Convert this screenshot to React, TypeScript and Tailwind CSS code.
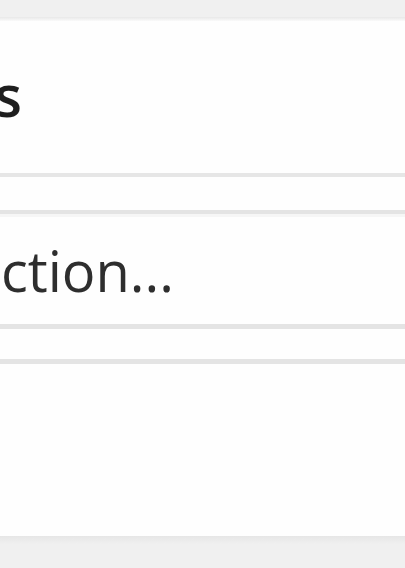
export default function App() {
  return (
    <div
      className="h-[568px] w-[405px] overflow-hidden bg-[#f0f0f0] flex flex-col"
      style={{ fontFamily: '"Open Sans", "Noto Sans", sans-serif' }}
    >
      {/* top gap */}
      <div className="h-[17px] shrink-0" />
      <div className="h-[4px] shrink-0 bg-gradient-to-b from-[#e8e8e8] to-[#fafafa]" />

      {/* heading panel */}
      <div className="h-[152px] shrink-0 bg-[#fefefe] flex items-center">
        <div className="w-[22px] flex justify-end whitespace-nowrap">
          <span className="text-[57px] leading-none font-semibold text-[#1e1e1e] -mt-[4px]">Actions</span>
        </div>
      </div>
      <div className="h-[4px] shrink-0 bg-[#e6e6e6]" />

      <div className="h-[33px] shrink-0 bg-[#fefefe]" />

      {/* action picker */}
      <div className="h-[4px] shrink-0 bg-[#e4e4e4]" />
      <div className="h-[3px] shrink-0 bg-[#f6f6f6]" />
      <div className="h-[107px] shrink-0 bg-[#fefefe] flex items-center">
        <div className="w-[174px] flex justify-end whitespace-nowrap">
          <span className="text-[56px] leading-none text-[#2e2e2e] -mt-[2px]">Add an action...</span>
        </div>
      </div>
      <div className="h-[5px] shrink-0 bg-[#e4e4e4]" />

      <div className="h-[30px] shrink-0 bg-[#fefefe]" />
      <div className="h-[5px] shrink-0 bg-[#e4e4e4]" />

      {/* empty list */}
      <div className="h-[172px] shrink-0 bg-[#fefefe]" />
      <div className="h-[8px] shrink-0 bg-gradient-to-b from-[#e6e6e6] to-[#f0f0f0]" />
      <div className="flex-1" />
    </div>
  );
}
